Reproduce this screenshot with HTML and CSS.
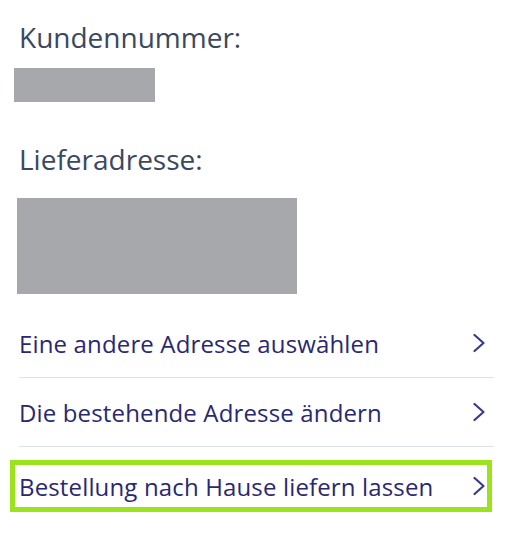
FILE: index.html
```html
<!DOCTYPE html>
<html lang="de">

<head>
    <meta charset="UTF-8" />
    <meta name="viewport" content="width=device-width, initial-scale=1.0" />
    <title>Lieferung</title>
    <link rel="stylesheet" href="styles.css">
</head>

<body>
    <div class="panel">
        <h3 class="label">Kundennummer:</h3>
        <div class="placeholder customer-no"></div>

        <h3 class="label">Lieferadresse:</h3>
        <div class="placeholder address"></div>

        <ul class="options">
            <li class="option">
                <a href="#">Eine andere Adresse auswählen</a>
                <span class="chevron">
                    <svg width="12" height="20" viewBox="0 0 12 20"><path d="M1.5 2 L10.5 10 L1.5 18" fill="none" stroke="currentColor" stroke-width="2.2" stroke-linecap="round" stroke-linejoin="round"/></svg>
                </span>
            </li>
            <li class="option">
                <a href="#">Die bestehende Adresse ändern</a>
                <span class="chevron">
                    <svg width="12" height="20" viewBox="0 0 12 20"><path d="M1.5 2 L10.5 10 L1.5 18" fill="none" stroke="currentColor" stroke-width="2.2" stroke-linecap="round" stroke-linejoin="round"/></svg>
                </span>
            </li>
            <li class="option last">
                <div class="focus-ring">
                    <a href="#">Bestellung nach Hause liefern lassen</a>
                    <span class="chevron">
                        <svg width="12" height="20" viewBox="0 0 12 20"><path d="M1.5 2 L10.5 10 L1.5 18" fill="none" stroke="currentColor" stroke-width="2.2" stroke-linecap="round" stroke-linejoin="round"/></svg>
                    </span>
                </div>
            </li>
        </ul>
    </div>
</body>

</html>
```

FILE: styles.css
```css
body {
    margin: 0;
    background: #fff;
    font-family: 'Open Sans', 'Noto Sans', Arial, sans-serif;
}

.panel {
    padding: 20px 11px 0 19px;
}

.label {
    margin: 0;
    font-size: 28px;
    font-weight: 400;
    line-height: 34px;
    color: #3a495d;
}

.placeholder {
    background: #a7a8ab;
}

.customer-no {
    width: 141px;
    height: 34px;
    margin: 14px 0 0 -5px;
}

.address {
    width: 280px;
    height: 96px;
    margin: 22px 0 0 -2px;
}

.label + .placeholder + .label {
    margin-top: 40px;
}

.options {
    list-style: none;
    margin: 15px 0 0;
    padding: 0;
}

.option {
    display: flex;
    align-items: center;
    justify-content: space-between;
    height: 68px;
    padding-right: 9px;
    border-bottom: 1px solid #dfe2e8;
}

.option a {
    color: #2a2872;
    font-size: 24px;
    letter-spacing: 0.15px;
    text-decoration: none;
}

.chevron {
    display: flex;
    color: #3a3a8c;
}

.option.last {
    border-bottom: none;
    padding-right: 0;
    align-items: flex-start;
}

.focus-ring {
    flex: 1;
    display: flex;
    align-items: center;
    justify-content: space-between;
    height: 42px;
    margin: 13px 2px 0 -9px;
    padding: 0 2px 0 4px;
    border: 5px solid #9be31c;
}
```
